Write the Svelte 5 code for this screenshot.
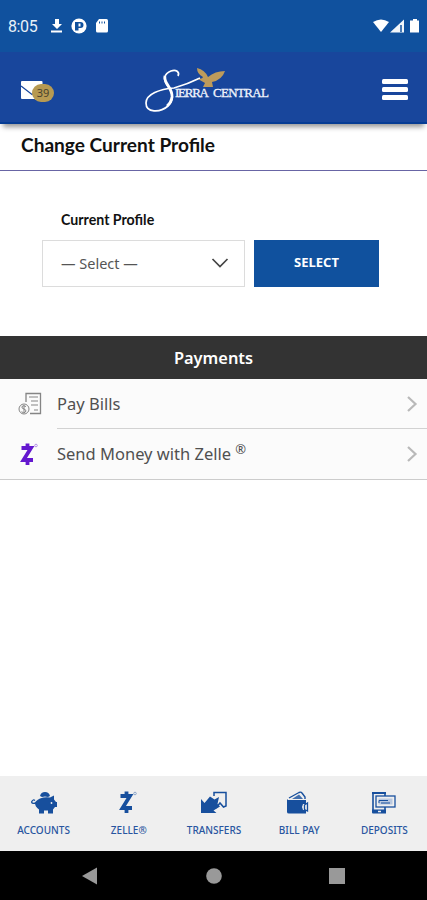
<script>
  const tabs = ['Accounts', 'Zelle®', 'Transfers', 'Bill Pay', 'Deposits'];
  const unread = 39;
</script>

<div class="screen">
  <div class="status-bar">
    <span class="time">8:05</span>
    <svg class="status-left" viewBox="0 0 60 16" width="60" height="16" fill="#fff">
      <path d="M5 1h4v5h3L7 11 2 6h3zM1 12.400h11v2H1z" />
      <circle cx="29" cy="8" r="7.600" />
      <path d="M25 4h5.500a3 3 0 0 1 0 6H28.500v2.500H25z" fill="#10519e" />
      <path d="M28.500 5.500h2v3h-2z" fill="#fff" />
      <path d="M49 1h7.500q1.500 0 1.500 1.500v10.500q0 1.500-1.500 1.500h-9q-1.500 0-1.500-1.500V5z" />
      <path d="M49.500 3.500v2M52 3.500v2M54.500 3.500v2" stroke="#10519e" />
    </svg>
    <svg class="status-right" viewBox="0 0 48 16" width="48" height="16" fill="#fff">
      <path d="M0 4Q8-1 16 4L8 14z" />
      <path d="M31 1.500v13H17z" opacity=".95" />
      <path d="M28 7v7" stroke="#10519e" stroke-width="1.500" />
      <path d="M40 1h4v1.500h2v12h-9V2.500h3z" />
    </svg>
  </div>

  <header>
    <div class="mail">
      <svg viewBox="0 0 22 18" width="22" height="18">
        <rect width="21.500" height="18" rx="1" fill="#fff" />
        <path d="M0 5l11 8.500L22 5" fill="none" stroke="#18469c" stroke-width="1.300" />
      </svg>
      <span class="badge">{unread}</span>
    </div>
    <svg class="logo" viewBox="0 0 126 46" width="126" height="46">
      <path d="M33 8C35 4 31 1 26 3C19 6 18 11 22 17C28 24 30 31 23 38C15 45 1 45 1 35C1 26 15 21 29 20Q43 16 55 10" fill="none" stroke="#fff" stroke-width="1.700" />
      <path d="M20 8C18 15 28 20 27 29Q26 35 22 38" fill="none" stroke="#fff" stroke-width="2.800" />
      <path d="M52 0Q60 2 63 9Q70 3 80 3Q77 12 67 14L68 19H58L60 15L53 11Q57 11 58 9Q52 6 52 0z" fill="#bd9b5b" />
      <text x="30" y="29" class="logo-text" textLength="34">IERRA</text>
      <text x="68" y="29" class="logo-text" textLength="56">CENTRAL</text>
    </svg>
    <button class="menu" aria-label="Menu"><i></i><i></i><i></i></button>
  </header>

  <h1><span>Change Current Profile</span></h1>

  <section class="profile">
    <span class="label">Current Profile</span>
    <div class="controls">
      <div class="select">
        <span>— Select —</span>
        <svg viewBox="0 0 18 12" width="18" height="12"><path d="M1.500 2L9 9.500 16.500 2" fill="none" stroke="#444" stroke-width="1.700" /></svg>
      </div>
      <button class="submit"><span>SELECT</span></button>
    </div>
  </section>

  <h2>Payments</h2>
  <ul>
    <li>
      <svg class="item-icon" viewBox="0 0 24 24" width="24" height="24" fill="none" stroke="#858585">
        <path d="M8 10V1.500h14.500v20H12" stroke-width="1.300" />
        <path d="M11 5h9M13 9h7M13 13h7M16 18h4" />
        <circle cx="6" cy="17" r="5" />
        <path d="M8 14.500q-3-1.500-4 0t2 2.500 1.500 3-4-.3M6 13v8" />
      </svg>
      <span class="row"><span>Pay Bills</span>{@render chevron()}</span>
    </li>
    <li>
      <svg class="item-icon" viewBox="4 0 24 24" width="24" height="24">{@render zelle('#6418cf')}</svg>
      <span class="row"><span>Send Money with Zelle <sup>®</sup></span>{@render chevron()}</span>
    </li>
  </ul>

  <nav class="tabs">
    {#each tabs as tab, i}
      <button class="tab">
        <svg viewBox="0 0 26 24" width="26" height="24" fill="#174f9d">
          {#if i === 0}
            <path d="M9 5q1-4 5-4t5 4l-2 1q-3-1-6 0z" />
            <path d="M9 7.500q5-2 10-1l4-2v4l2 2.500h1v5h-2l-2 2.500v4h-5v-3h-4v3H8v-4q-4-3-4-6.500Q4 10 9 7.500z" />
            <path d="M5 12Q0 13 .8 10.500Q2 8 4 9.500" fill="none" stroke="#174f9d" stroke-width="1.300" />
            <circle cx="20.500" cy="12" r=".9" fill="#efefef" />
          {:else if i === 1}
            <g transform="translate(-3 -1)">{@render zelle('#174f9d')}</g>
          {:else if i === 2}
            <path d="M13 5V1.500h12V15l-2.500 1-3.500-4-4 5" fill="none" stroke="#174f9d" stroke-width="1.500" />
            <path d="M0 8l3.500 4L9 5.500l4.500 3L18 6l-1.500 7 2.500 2.500-6.500 4 3 2.500H0z" />
          {:else if i === 3}
            <path d="M2 9h18v4h-3l-1 3 1 3h3v3.500H3q-2 0-2-1.500V8z" />
            <path d="M3 7l10-5.500q2-1 3 .5l3 4v2" fill="none" stroke="#174f9d" stroke-width="1.400" />
            <path d="M6 8l7-4.500 4 4.500z" opacity=".8" />
            <path d="M18.500 14l3-2v8l-3-1.500z" fill="#efefef" stroke="#174f9d" stroke-width="1.300" />
          {:else}
            <path d="M14 5V1.700H2V20h12v-4" fill="none" stroke="#174f9d" stroke-width="1.600" />
            <path d="M1 1h14v2H1zM1 18.500h14v4H2q-1 0-1-1z" />
            <path d="M7 20.500h3" stroke="#efefef" stroke-width="1.500" />
            <rect x="5" y="5" width="19" height="11" fill="#efefef" stroke="#174f9d" stroke-width="1.300" />
            <rect x="7.500" y="7.500" width="14" height="6" fill="#b9c8df" />
            <path d="M8 12V9.500h9M10 12h9" fill="none" stroke="#174f9d" />
          {/if}
        </svg>
        <span class="tab-label">{tab}</span>
      </button>
    {/each}
  </nav>

  <div class="system-nav">
    <svg viewBox="0 0 18 18" width="18" height="18"><path d="M1 9L16 .5v17z" /></svg>
    <svg viewBox="0 0 18 18" width="18" height="18"><circle cx="9" cy="9" r="7.800" /></svg>
    <svg viewBox="0 0 18 18" width="18" height="18"><path d="M1 1h16v16H1z" /></svg>
  </div>
</div>

{#snippet chevron()}
  <svg class="chevron" viewBox="0 0 12 18" width="12" height="18"><path d="M2 2l7.500 7L2 16" fill="none" stroke="#b9b9b9" stroke-width="2.200" /></svg>
{/snippet}

{#snippet zelle(color)}
  <path d="M7.500 6h9.500L9.500 18h9.500M13.500 1.500v4M13.500 19v4" fill="none" stroke={color} stroke-width="3.800" />
  <circle cx="22" cy="3.500" r="1.300" fill="none" stroke={color} stroke-width=".8" opacity=".5" />
{/snippet}

<style>
  :global(body) {
    margin: 0;
    background: #fff;
  }

  .screen {
    width: 427px;
    height: 900px;
    display: flex;
    flex-direction: column;
    overflow: hidden;
    font-family: "Noto Sans", "Open Sans", sans-serif;
  }

  button {
    border: 0;
    padding: 0;
    font: inherit;
    background: none;
  }

  svg {
    display: block;
    flex: none;
  }

  .status-bar {
    height: 52px;
    box-sizing: border-box;
    padding: 0 6px 0 8px;
    display: flex;
    align-items: center;
    background: #10519e;
  }

  .time {
    width: 42px;
    color: #e8f0f8;
    font: 16px Roboto, sans-serif;
    letter-spacing: -0.4px;
  }

  .status-right {
    margin-left: auto;
  }

  header {
    position: relative;
    height: 72px;
    box-sizing: border-box;
    flex: none;
    padding: 4px 19px 0 21px;
    display: flex;
    align-items: center;
    justify-content: space-between;
    background: #18469c;
    border-bottom: 2px solid #063c94;
    box-shadow: 0 6px 5px -3px #999;
  }

  .mail {
    width: 33px;
    height: 22px;
    display: flex;
    padding-top: 5px;
  }

  .badge {
    margin: 3px 0 0 -11px;
    width: 22px;
    height: 18px;
    flex: none;
    border-radius: 10px;
    background: #b79a52;
    color: #49422e;
    font-size: 11px;
    line-height: 17px;
    text-align: center;
  }

  .logo {
    margin: 4px auto 0 91px;
  }

  .logo-text {
    fill: #f0f4fc;
    stroke: #f0f4fc;
    stroke-width: 0.3px;
    font: 13px "Liberation Serif", serif;
  }

  .menu {
    width: 26px;
    display: grid;
    gap: 3px;
  }

  .menu i {
    height: 5px;
    border-radius: 1.5px;
    background: #fff;
  }

  h1 {
    height: 47px;
    box-sizing: border-box;
    flex: none;
    margin: 0;
    padding-left: 21px;
    border-bottom: 1px solid #6865a5;
    color: #111;
    font: bold 19.1px/42px Lato, sans-serif;
  }

  .profile {
    height: 165px;
    box-sizing: border-box;
    flex: none;
    padding: 39px 48px 0 42px;
  }

  .label {
    display: block;
    height: 30px;
    padding-left: 19px;
    color: #111;
    font: bold 14.2px/19px Lato, sans-serif;
  }

  .controls {
    display: flex;
    justify-content: space-between;
  }

  .select {
    width: 203px;
    height: 47px;
    box-sizing: border-box;
    padding: 0 15px 1px 18px;
    border: 1px solid #dcdcdc;
    display: flex;
    align-items: center;
    justify-content: space-between;
    color: #555;
    font-size: 14.5px;
  }

  .submit {
    width: 125px;
    height: 47px;
    padding-bottom: 4px;
    background: #10519e;
    color: #fff;
    font-size: 13px;
    font-weight: bold;
  }

  h2 {
    height: 43px;
    flex: none;
    margin: 0;
    background: #333;
    color: #fff;
    font-size: 16.4px;
    font-weight: 600;
    line-height: 43px;
    text-align: center;
  }

  ul {
    height: 100px;
    margin: 0;
    padding: 0;
    list-style: none;
    background: #fbfbfb;
    border-bottom: 1px solid #ccc;
  }

  li {
    height: 50px;
    display: flex;
    align-items: center;
  }

  .item-icon {
    margin: 0 15px 0 18px;
  }

  .row {
    flex: 1;
    height: 50px;
    box-sizing: border-box;
    padding-right: 9px;
    display: flex;
    align-items: center;
    justify-content: space-between;
    color: #505050;
    font-size: 16.5px;
  }

  li:first-child .row {
    border-bottom: 1px solid #d2d2d2;
  }

  li:last-child .row {
    padding-bottom: 1px;
  }

  sup {
    font-size: 13px;
    line-height: 0;
  }

  .tabs {
    height: 75px;
    box-sizing: border-box;
    flex: none;
    margin-top: auto;
    padding-left: 1px;
    display: grid;
    grid-template-columns: repeat(5, 1fr);
    background: #efefef;
  }

  .tab {
    display: flex;
    flex-direction: column;
    align-items: center;
    padding-top: 15px;
    color: #2855a0;
    text-transform: uppercase;
  }

  .tab-label {
    margin-top: 8px;
    font-size: 10px;
    font-weight: 500;
    line-height: 14px;
    white-space: nowrap;
  }

  .system-nav {
    height: 49px;
    flex: none;
    padding: 0 81px;
    box-sizing: border-box;
    display: flex;
    align-items: center;
    justify-content: space-between;
    background: #000;
    fill: #999;
  }
</style>
